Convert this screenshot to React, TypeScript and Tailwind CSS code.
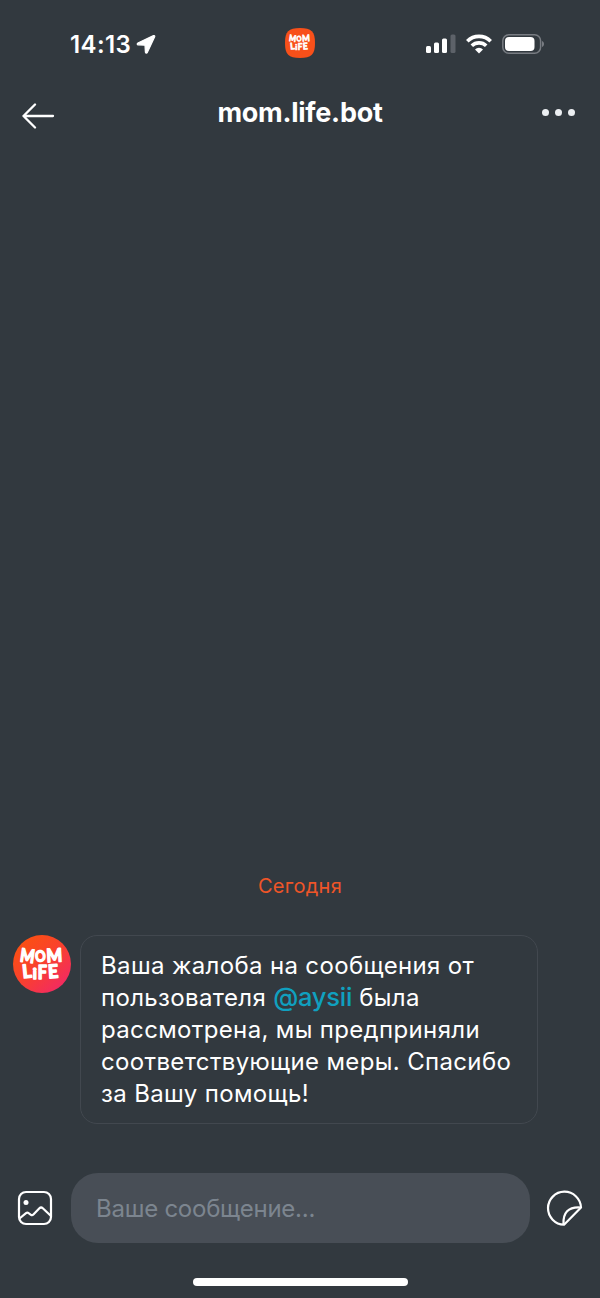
type Glyph = { char: string; x: number; y: number; rotate: number; size: number; stretch: number };

const logoGlyphs: Glyph[] = [
  { char: "M", x: 14.4, y: 27.4, rotate: 8, size: 18.5, stretch: 0.82 },
  { char: "O", x: 27.4, y: 26.6, rotate: -6, size: 15, stretch: 0.86 },
  { char: "M", x: 41.4, y: 26.8, rotate: -3, size: 18.5, stretch: 0.9 },
  { char: "L", x: 14, y: 42.8, rotate: -6, size: 18.5, stretch: 0.95 },
  { char: "i", x: 21.8, y: 43.6, rotate: 0, size: 16, stretch: 1 },
  { char: "F", x: 29.4, y: 43.8, rotate: 0, size: 18, stretch: 0.9 },
  { char: "E", x: 40, y: 43, rotate: -4, size: 18.5, stretch: 0.95 },
];

const messageLines = [
  { text: "Ваша жалоба на сообщения от" },
  { text: "пользователя ", mention: "@aysii", rest: " была" },
  { text: "рассмотрена, мы предприняли" },
  { text: "соответствующие меры. Спасибо" },
  { text: "за Вашу помощь!" },
];

function LogoText() {
  return (
    <g
      fill="#fff"
      stroke="#fff"
      strokeWidth="1.5"
      strokeLinejoin="round"
      strokeLinecap="round"
      textAnchor="middle"
      fontFamily="Lato, sans-serif"
      fontWeight="700"
    >
      {logoGlyphs.map((g, i) => (
        <text
          key={i}
          fontSize={g.size}
          transform={`translate(${g.x} ${g.y}) rotate(${g.rotate} 0 -6) scale(${g.stretch} 1)`}
        >
          {g.char}
        </text>
      ))}
    </g>
  );
}

function Avatar() {
  return (
    <svg viewBox="0 0 58 58" className="h-[58px] w-[58px] shrink-0">
      <defs>
        <linearGradient id="avatar" x1="0.15" y1="0.1" x2="0.85" y2="0.9">
          <stop offset="0" stopColor="#fb5012" />
          <stop offset="0.5" stopColor="#f9402f" />
          <stop offset="1" stopColor="#f22a62" />
        </linearGradient>
      </defs>
      <circle cx="29" cy="29" r="29" fill="url(#avatar)" />
      <LogoText />
    </svg>
  );
}

function StatusBar() {
  return (
    <div className="flex h-[88px] items-center">
      <div className="flex w-[285px] items-center pl-[70px]">
        <span className="pt-0.5 text-[24px] leading-8 font-semibold tracking-[0.4px]">14:13</span>
        <svg viewBox="0 0 20 20" className="ml-[5px] h-5 w-5" fill="#fff">
          <path
            d="M17.500 1.600 1.900 9c-1 .5-.9 1.700.3 1.800l6.800.4.400 6.900c.1 1.200 1.400 1.400 1.900.3L18.700 2.800c.3-.8-.4-1.500-1.200-1.200Z"
            stroke="#fff"
            strokeWidth="1.2"
            strokeLinejoin="round"
          />
        </svg>
      </div>
      <svg viewBox="0 0 30 30" className="-mt-0.5 h-[30px] w-[30px]">
        <path
          d="M15 0C26.500 0 30 3.500 30 15S26.500 30 15 30 0 26.500 0 15 3.500 0 15 0Z"
          fill="#f8501a"
        />
        <g transform="translate(0.6 0.2) scale(0.49)">
          <LogoText />
        </g>
      </svg>
      <div className="flex items-center pl-[111px]">
        <svg viewBox="0 0 30 20" className="h-5 w-[30px]" fill="#fff">
          <rect x="0" y="12" width="5" height="7" rx="1.500" />
          <rect x="8" y="8.500" width="5" height="10.500" rx="1.500" />
          <rect x="16" y="4.500" width="5" height="14.500" rx="1.500" />
          <rect x="24.500" y="0.500" width="5" height="18.500" rx="1.500" fill="#5d6269" />
        </svg>
        <svg viewBox="0 0 26 20" className="ml-[10px] h-5 w-[26px]" fill="none" stroke="#fff" strokeWidth="3.600">
          <path d="M1.300 7.200a16.600 16.600 0 0 1 23.400 0" />
          <path d="M5.800 11.800a10.300 10.300 0 0 1 14.400 0" />
          <path d="M13 19.500 9 15.400a5.800 5.800 0 0 1 8 0Z" fill="#fff" stroke="none" />
        </svg>
        <svg viewBox="0 0 43 20" className="ml-[10px] h-5 w-[43px]">
          <rect x="0.800" y="0.800" width="37.800" height="18.400" rx="6" fill="none" stroke="#787c82" strokeWidth="1.500" />
          <rect x="3" y="3" width="29.500" height="14" rx="4" fill="#fff" />
          <path d="M40 7v6c2.700-.8 2.700-5.200 0-6Z" fill="#787c82" />
        </svg>
      </div>
    </div>
  );
}

function Header() {
  return (
    <header className="flex h-[60px] items-center justify-between pr-[25px] pl-[22px]">
      <svg viewBox="0 0 33 28" className="-mt-1 h-7 w-[33px]" fill="none" stroke="#fff" strokeWidth="2.300" strokeLinecap="round" strokeLinejoin="round">
        <path d="M31 14H1.500M13 2.500 1.500 14 13 25.500" />
      </svg>
      <h1 className="-mt-2.5 pl-[3px] text-[27px] leading-9 font-bold tracking-[-0.25px]">mom.life.bot</h1>
      <div className="-mt-3 flex gap-[6px]">
        <span className="h-[7px] w-[7px] rounded-full bg-[#eceff2]" />
        <span className="h-[7px] w-[7px] rounded-full bg-[#eceff2]" />
        <span className="h-[7px] w-[7px] rounded-full bg-[#eceff2]" />
      </div>
    </header>
  );
}

function Message() {
  return (
    <div className="flex gap-[9.500px] pl-[12.500px]">
      <Avatar />
      <div className="h-[189px] w-[458px] rounded-[17px] border border-[#42484f] pt-[14px] pl-5">
        {messageLines.map((line) => (
          <p key={line.text} className="h-8 text-[24px] leading-8 tracking-[0.35px] whitespace-pre">
            {line.text}
            {line.mention && (
              <span className="text-[25.500px] leading-none font-medium tracking-[-0.25px] text-[#10a0bf]">
                {line.mention}
              </span>
            )}
            {line.rest}
          </p>
        ))}
      </div>
    </div>
  );
}

function Composer() {
  return (
    <div className="flex h-[70px] items-center">
      <svg viewBox="0 0 36 36" className="ml-[17px] h-9 w-9" fill="none" stroke="#fff" strokeWidth="2.200" strokeLinejoin="round">
        <rect x="2" y="2" width="32" height="32" rx="7" />
        <circle cx="9" cy="12.500" r="2.500" fill="#fff" stroke="none" />
        <path d="M2.500 28.500 9 23.200q1.300-1 2.600 0l2.300 1.600q1.300.9 2.500-.3l6-6.200q1.700-1.600 3.400 0L34 26" />
      </svg>
      <div className="ml-[17.500px] flex h-[70px] w-[459px] items-center rounded-[27px] bg-[#484e56] pl-[25.500px]">
        <span className="pt-0.5 text-[24px] leading-8 tracking-[-0.25px] text-[#7c858f]">Ваше сообщение...</span>
      </div>
      <svg viewBox="0 0 37 37" className="ml-[16.500px] h-[37px] w-[37px]" fill="none" stroke="#fff" strokeWidth="2.200" strokeLinejoin="round">
        <path d="M35 17.500A16.500 16.500 0 1 0 18 34.700L35 17.500Z" />
        <path d="M17.500 34.500C16.800 23 22 16.500 34.800 17.500" />
      </svg>
    </div>
  );
}

export default function App() {
  return (
    <main className="flex h-[1298px] w-[600px] flex-col overflow-hidden bg-[#32393f] font-[Inter,sans-serif] text-white">
      <StatusBar />
      <Header />
      <section className="flex flex-1 flex-col justify-end">
        <p className="mb-[35px] text-center text-[20px] leading-7 tracking-[0.3px] text-[#ee5528]">Сегодня</p>
        <Message />
      </section>
      <div className="mt-[49px] mb-[35px]">
        <Composer />
      </div>
      <div className="mx-auto mb-3 h-2 w-[215px] shrink-0 rounded-full bg-white" />
    </main>
  );
}
